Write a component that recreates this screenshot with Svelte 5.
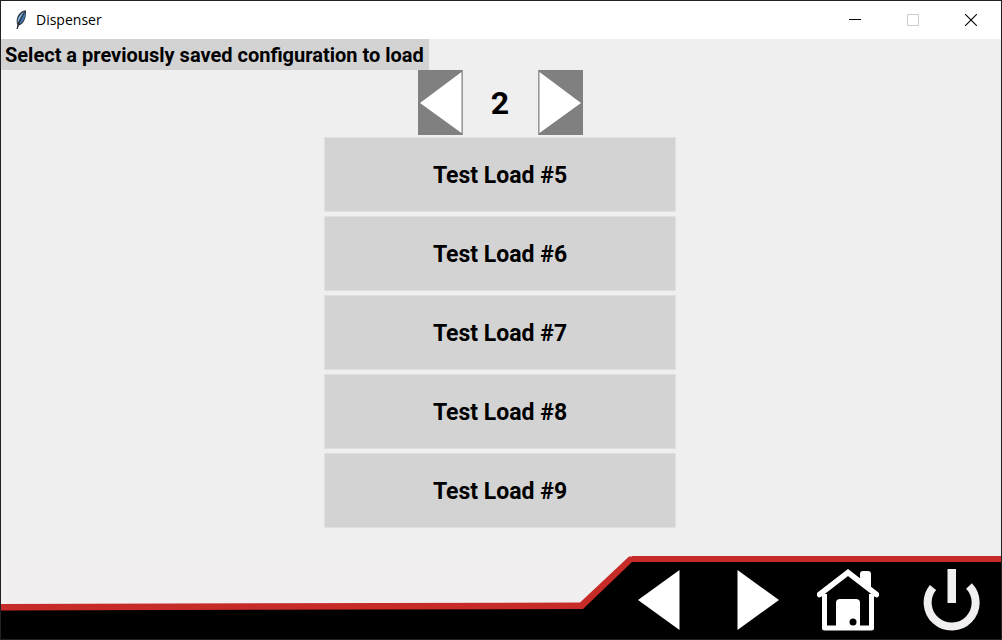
<script>
  const title = 'Dispenser';
  let page = $state(2);
  let loads = $derived([0, 1, 2, 3, 4].map((i) => `Test Load #${(page - 1) * 5 + i}`));
  const previous = () => { if (page > 1) page -= 1; };
  const next = () => { page += 1; };
</script>

<div class="window">
  <header class="titlebar">
    <svg class="feather" width="12" height="20" viewBox="0 0 12 20" aria-hidden="true">
      <path d="M1.6 19 2.4 15C0.8 11 2 6 5 3 7 1 9 0.2 10.8 0.2 11.4 4 10.6 8 9 11 7.6 13.6 5.6 15 3.8 15.4L2.8 19Z" fill="#27303b" />
      <path d="M2.6 13C2.2 9 4 4.6 9.4 1.4L5 9.600Z" fill="#86b3e2" />
      <path d="M4 14 10 2C10.6 6.4 9 12.2 4 14Z" fill="#4674ad" />
      <path d="M2.2 18.6C3.6 12 6 6.4 10.2 1" fill="none" stroke="#26313f" stroke-width="0.7" />
    </svg>
    <h1>{title}</h1>
    <div class="controls">
      <button aria-label="Minimize"><svg width="12" height="12" viewBox="0 0 12 12"><path d="M0 5.5H12" stroke="#000" /></svg></button>
      <button aria-label="Maximize" disabled><svg width="12" height="12" viewBox="0 0 12 12"><path d="M.5 .5H11.5V11.5H.5Z" fill="none" stroke="#ccc" /></svg></button>
      <button aria-label="Close"><svg width="12" height="12" viewBox="0 0 12 12"><path d="M0 0 12 12M12 0 0 12" stroke="#000" stroke-width="1.1" /></svg></button>
    </div>
  </header>

  <main>
    <h2>Select a previously saved configuration to load</h2>
    <div class="pager">
      <button aria-label="Previous page" onclick={previous}>
        <svg width="45" height="65" viewBox="0 0 45 65"><path d="M43.5 2V63L2 33Z" fill="#fff" /><path d="M44.5 0V65" stroke="#999" /></svg>
      </button>
      <output>{page}</output>
      <button aria-label="Next page" onclick={next}>
        <svg width="45" height="65" viewBox="0 0 45 65"><path d="M1.5 2V63L43 33Z" fill="#fff" /><path d="M.5 0V65" stroke="#999" /></svg>
      </button>
    </div>
    <div class="loads">
      {#each loads as load}
        <button>{load}</button>
      {/each}
    </div>
  </main>

  <footer>
    <svg class="rail" viewBox="0 0 580 83" preserveAspectRatio="none" aria-hidden="true">
      <path d="M0 51.5 580 50V83H0Z" fill="#000" />
      <path d="M0 48 580 46.5V53L0 54.5Z" fill="#c62b27" />
    </svg>
    <svg class="slope" width="52" height="83" viewBox="0 0 52 83" aria-hidden="true">
      <path d="M0 50H1L50 3H52V83H0Z" fill="#000" />
      <path d="M0 46.5 49 0.5H52V6H52L3 53H0Z" fill="#c62b27" />
    </svg>
    <nav>
      <button aria-label="Back"><svg width="42" height="62" viewBox="0 0 42 62"><path d="M41.5 1V61L0 31Z" fill="#fff" /></svg></button>
      <button aria-label="Forward"><svg width="42" height="62" viewBox="0 0 42 62"><path d="M.5 1V61L42 31Z" fill="#fff" /></svg></button>
      <button aria-label="Home">
        <svg width="62" height="62" viewBox="0 0 62 62">
          <path d="M43 10V5Q43 2 46 2H51Q54 2 54 5V19Z" fill="#fff" />
          <path d="M7.5 25V59H54.5V25" fill="none" stroke="#fff" stroke-width="5" stroke-linejoin="round" />
          <path d="M2.5 25.5 31 3.5 59.5 25.5" fill="none" stroke="#fff" stroke-width="5.5" stroke-linecap="round" />
          <path d="M19 58V34Q19 30 23 30H39Q43 30 43 34V58Z" fill="#fff" />
          <circle cx="36" cy="53" r="3.5" fill="#000" />
        </svg>
      </button>
      <button aria-label="Power">
        <svg width="58" height="62" viewBox="0 0 58 62">
          <path d="M10 18.5A24 24 0 1 0 46 17" fill="none" stroke="#f1eff0" stroke-width="8" />
          <path d="M24.500 0H33V34H24.500Z" fill="#f1eff0" />
        </svg>
      </button>
    </nav>
  </footer>
</div>

<style>
  :global(body) { margin: 0; }
  .window {
    box-sizing: border-box;
    min-height: 100vh;
    display: flex;
    flex-direction: column;
    border: 1px solid #222022;
    background: #efefef;
    color: #000;
    font-family: Roboto, "Liberation Sans", sans-serif;
  }
  button {
    padding: 0;
    border: 0;
    background: none;
    color: inherit;
    font: inherit;
  }
  svg { display: block; flex: none; }
  .titlebar {
    height: 38px;
    display: flex;
    align-items: center;
    background: #fff;
  }
  .feather { margin-left: 14px; }
  h1 {
    flex: 1;
    margin: 0 0 0 9px;
    font: 400 14px/20px "Open Sans", "Noto Sans", sans-serif;
  }
  .controls {
    display: flex;
    gap: 12px;
    align-self: stretch;
    margin-right: 7px;
  }
  .controls button {
    width: 46px;
    display: flex;
    align-items: center;
    justify-content: center;
  }
  main { flex: 1; padding: 0 2px 28px 0; }
  h2 {
    width: fit-content;
    margin: 0;
    padding: 5px 5px 3px 4px;
    background: #d3d3d3;
    font-size: 20px;
    line-height: 23px;
    font-weight: 700;
  }
  .pager { display: flex; justify-content: center; }
  .pager button { height: 65px; background: #808080; }
  output {
    width: 75px;
    text-align: center;
    font-size: 32px;
    line-height: 67px;
    font-weight: 700;
  }
  .loads {
    display: grid;
    gap: 4px;
    width: 352px;
    max-width: 100%;
    margin: 0 auto;
  }
  .loads button {
    height: 75px;
    padding-top: 2px;
    box-sizing: border-box;
    border: 1px solid #dfdfdf;
    background: #d3d3d3;
    font-size: 23px;
    font-weight: 700;
  }
  footer { display: flex; height: 83px; background: #f1eff0; }
  .rail { flex: 1 1 0; min-width: 0; width: 0; height: 83px; }
  nav {
    box-sizing: border-box;
    flex: none;
    display: flex;
    align-items: center;
    padding: 0 20px 1px 6px;
    border-top: 6px solid #c62b27;
    background: #000;
  }
  nav button + button { margin-left: 57px; }
  nav button:nth-child(3) { margin-left: 38px; }
  nav button:nth-child(4) { margin-left: 44px; }
</style>
